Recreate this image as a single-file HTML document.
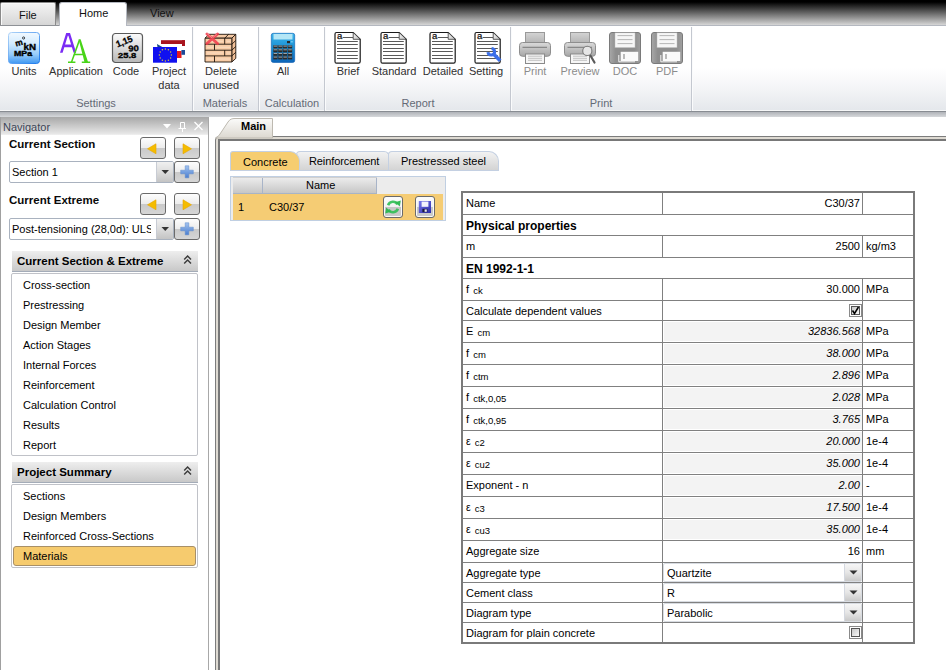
<!DOCTYPE html>
<html><head><meta charset="utf-8">
<style>
*{margin:0;padding:0;box-sizing:border-box}
html,body{width:946px;height:670px;overflow:hidden;background:#fff;font-family:"Liberation Sans",sans-serif;font-size:11px;color:#000}
.a{position:absolute}
.t{position:absolute;white-space:nowrap;line-height:13px}
svg{position:absolute;overflow:visible}
#top{left:0;top:0;width:946px;height:26px;background:linear-gradient(#000 0px,#000 2px,#d6d6d6 25px)}
#file{left:0;top:2px;width:56px;height:23px;background:linear-gradient(#f4f4f4,#d6d6d6);border:1px solid #8a8a8a;border-bottom:none;border-radius:2px 2px 0 0;box-shadow:inset 1px 1px 0 #fafafa}
#home{left:59px;top:2px;width:68px;height:25px;background:#fff;border:1px solid #b4b8c0;border-bottom:none;border-radius:3px 3px 0 0}
#ribbon{left:0;top:26px;width:946px;height:85px;background:linear-gradient(#fff 0px,#fff 42px,#f4f5f7 62px,#e4e7eb 85px)}
#rb1{left:0;top:110px;width:946px;height:1px;background:#f6f7f8}
#rb2{left:0;top:111px;width:946px;height:1px;background:#888c92}
#rb3{left:0;top:112px;width:946px;height:5px;background:linear-gradient(#b0b3b8,#d6d8db)}
.sep{position:absolute;top:27px;width:2px;height:84px;border-left:1px solid #c4c8d0;border-right:1px solid #fafbfc}
.rl{position:absolute;width:80px;text-align:center;white-space:nowrap;line-height:13px;color:#303030}
.gl{position:absolute;top:97px;width:100px;text-align:center;white-space:nowrap;color:#646a76;line-height:13px}
.dis{color:#8c8c8c}
#nav{left:0;top:117px;width:209px;height:553px;background:#fff;border-left:1px solid #a0a0a0;border-right:1px solid #a8a8a8}
#navt{left:1px;top:117px;width:207px;height:18px;background:linear-gradient(#a8a8a8,#e8e8e8 95%,#f4f4f4)}
.nbtn{position:absolute;width:26px;height:22px;border:1px solid #6a6a6a;border-radius:3px;background:linear-gradient(#fdfdfd 0,#ececec 50%,#c9c9c9 51%,#d6d6d6 100%)}
.combo{position:absolute;left:9px;width:165px;height:22px;border:1px solid #a9b2bf;border-radius:2px;background:#fff;overflow:hidden}
.cdd{position:absolute;right:0;top:0;width:17px;height:20px;background:linear-gradient(#f0f0f0,#dcdcdc 50%,#c4c4c4);border-left:1px solid #c8ccd4}
.hdr{position:absolute;left:12px;width:186px;height:21px;background:linear-gradient(#eeeeee,#c8c8c8);border-bottom:1px solid #a4acb8}
.lst{position:absolute;left:11px;width:187px;border:1px solid #c0c2c8;border-radius:2px;background:#fff}
.li{position:absolute;left:23px;white-space:nowrap;line-height:13px}
.bt{font-weight:bold;font-size:11.5px}
</style></head><body>
<div id="top" class="a"></div>
<div id="file" class="a"></div><div class="t" style="left:19px;top:9px;color:#111">File</div>
<div class="a" style="left:0;top:25px;width:59px;height:1px;background:#8e9196"></div><div class="a" style="left:126px;top:25px;width:820px;height:1px;background:#b4b8c0"></div><div id="home" class="a"></div><div class="t" style="left:79px;top:7px;color:#111">Home</div>
<div class="t" style="left:150px;top:7px;color:#111">View</div>
<div id="ribbon" class="a"></div>
<div id="rb1" class="a"></div><div id="rb2" class="a"></div><div id="rb3" class="a"></div>
<div class="sep" style="left:192px"></div>
<div class="sep" style="left:258px"></div>
<div class="sep" style="left:324px"></div>
<div class="sep" style="left:510px"></div>
<div class="sep" style="left:691px"></div>
<div class="rl" style="left:-16px;top:65px">Units</div>
<div class="rl" style="left:36px;top:65px">Application</div>
<div class="rl" style="left:86px;top:65px">Code</div>
<div class="rl" style="left:129px;top:65px">Project</div><div class="rl" style="left:129px;top:79px">data</div>
<div class="rl" style="left:181px;top:65px">Delete</div><div class="rl" style="left:181px;top:79px">unused</div>
<div class="rl" style="left:243px;top:65px">All</div>
<div class="rl" style="left:308px;top:65px">Brief</div>
<div class="rl" style="left:354px;top:65px">Standard</div>
<div class="rl" style="left:403px;top:65px">Detailed</div>
<div class="rl" style="left:446px;top:65px">Setting</div>
<div class="rl dis" style="left:495px;top:65px">Print</div>
<div class="rl dis" style="left:540px;top:65px">Preview</div>
<div class="rl dis" style="left:585px;top:65px">DOC</div>
<div class="rl dis" style="left:627px;top:65px">PDF</div>
<div class="gl" style="left:46px">Settings</div>
<div class="gl" style="left:175px">Materials</div>
<div class="gl" style="left:242px">Calculation</div>
<div class="gl" style="left:368px">Report</div>
<div class="gl" style="left:551px">Print</div>
<style>
.sec{font-weight:bold;font-size:12px}
.sub{font-size:9.5px;position:relative;top:1px;margin-left:1px}
.chk{position:absolute;width:13px;height:13px;border:1px solid #8a8a8a;background:#fff;padding:1px}
.chki{width:9px;height:9px;border:1px solid #555;background:linear-gradient(135deg,#c8c8c8,#f8f8f8)}
.cmb{position:absolute;width:199px;border:1px solid #d8dce2;border-radius:2px;background:#fff}
.cmbd{position:absolute;right:0;top:0;width:17px;height:100%;background:linear-gradient(#f6f6f6,#e6e6e6 50%,#c9c9c9);border-left:1px solid #d4d8e0}
</style>
<!-- Units icon -->
<svg style="left:8px;top:32px" width="32" height="32" viewBox="0 0 32 32">
<defs><linearGradient id="gu" x1="0" y1="0" x2="0" y2="1"><stop offset="0" stop-color="#f2f9ff"/><stop offset="0.35" stop-color="#d4ecff"/><stop offset="0.7" stop-color="#98ccfa"/><stop offset="1" stop-color="#3f98f2"/></linearGradient>
<linearGradient id="gub" x1="0" y1="0" x2="1" y2="1"><stop offset="0" stop-color="#b0d4f8"/><stop offset="1" stop-color="#1a78ec"/></linearGradient></defs>
<rect x="0.5" y="0.5" width="31" height="31" rx="3" fill="url(#gu)" stroke="url(#gub)"/>
<text x="8" y="14.5" font-family="Liberation Sans" font-weight="bold" font-size="8.5" stroke="#000" stroke-width="0.35" transform="rotate(-15 8 14.5)">m</text>
<circle cx="15.6" cy="6" r="1.1" fill="none" stroke="#000" stroke-width="0.7"/>
<text x="15.5" y="18" font-family="Liberation Sans" font-weight="bold" font-size="8.5" stroke="#000" stroke-width="0.35" textLength="12.5" lengthAdjust="spacingAndGlyphs">kN</text>
<text x="6" y="24" font-family="Liberation Sans" font-weight="bold" font-size="7.5" stroke="#000" stroke-width="0.4" textLength="18" lengthAdjust="spacingAndGlyphs">MPa</text>
</svg>
<!-- Application icon -->
<svg style="left:56px;top:30px" width="40" height="36" viewBox="0 0 40 36">
<path fill-rule="evenodd" fill="#7b2cf4" d="M4 22.8 L10.2 3 H14 L20.2 22.8 H17.6 L15.9 17.2 H8.3 L6.6 22.8 Z M9.1 14.6 H15.1 L12.4 5.8 H11.8 Z"/>
<g fill="#48d418">
<path d="M22.6 9.2 H24.6 L32.2 32.4 H28.6 Z"/>
<path d="M22.8 9.6 L14.6 32.4 H16.2 L23.8 11.6 Z"/>
<path d="M18.2 23.8 H28.6 V25.2 H17.7 Z"/>
<path d="M12 31.6 H19.4 V33 H12 Z M25.8 31.6 H34.2 V33 H25.8 Z"/>
</g>
</svg>
<!-- Code icon -->
<svg style="left:112px;top:33px" width="31" height="30" viewBox="0 0 31 30">
<defs><linearGradient id="gc" x1="0" y1="0" x2="0" y2="1"><stop offset="0" stop-color="#fcfcfc"/><stop offset="1" stop-color="#b8b8b8"/></linearGradient></defs>
<rect x="0.5" y="0.5" width="30" height="29" rx="3" fill="url(#gc)" stroke="#5a5a5a" stroke-width="1.2"/>
<text x="5.5" y="14.5" font-family="Liberation Sans" font-weight="bold" font-size="9" stroke="#000" stroke-width="0.3" transform="rotate(-22 5.5 14.5)" textLength="17" lengthAdjust="spacingAndGlyphs">1,15</text>
<text x="16.5" y="18.5" font-family="Liberation Sans" font-weight="bold" font-size="8.2" stroke="#000" stroke-width="0.3" transform="rotate(-4 16.5 18.5)" textLength="10.5" lengthAdjust="spacingAndGlyphs">90</text>
<text x="6" y="25.4" font-family="Liberation Sans" font-weight="bold" font-size="8" stroke="#000" stroke-width="0.35" textLength="18.2" lengthAdjust="spacingAndGlyphs">25.8</text>
</svg>
<!-- Project data -->
<svg style="left:152px;top:40px" width="34" height="24" viewBox="0 0 34 24">
<rect x="9" y="0.2" width="24" height="3.8" fill="#a8141e"/>
<rect x="30" y="0.2" width="3" height="5.8" fill="#a8141e"/>
<rect x="25" y="11" width="4.5" height="7" fill="#ea1a1a"/>
<rect x="29.4" y="10" width="3.6" height="4.8" fill="#1e4a98"/>
<path d="M5 4 L10.8 7.2 H5.5 Z" fill="#1a4a88"/>
<rect x="1" y="7" width="24" height="15.7" fill="#1010f0"/>
<g fill="#d8c838"><circle cx="13.40" cy="9.00" r="0.75"/><circle cx="16.40" cy="9.80" r="0.75"/><circle cx="18.60" cy="12.00" r="0.75"/><circle cx="19.40" cy="15.00" r="0.75"/><circle cx="18.60" cy="18.00" r="0.75"/><circle cx="16.40" cy="20.20" r="0.75"/><circle cx="13.40" cy="21.00" r="0.75"/><circle cx="10.40" cy="20.20" r="0.75"/><circle cx="8.20" cy="18.00" r="0.75"/><circle cx="7.40" cy="15.00" r="0.75"/><circle cx="8.20" cy="12.00" r="0.75"/><circle cx="10.40" cy="9.80" r="0.75"/></g>
</svg>
<!-- Delete unused -->
<svg style="left:203px;top:31px" width="34" height="33" viewBox="0 0 34 33">
<g stroke="#1e140c" stroke-width="0.9" stroke-linejoin="round">
<path d="M2 7.2 L6 3.3 H32.8 L28.8 7.2 Z" fill="#f6caa4"/>
<path d="M28.8 7.2 L32.8 3.3 V27.4 L28.8 31 Z" fill="#f2c098"/>
<rect x="2" y="7.2" width="26.8" height="23.8" fill="#f8cca6"/>
<path d="M2 13.2 H28.8 M2 19.2 H28.8 M2 24.9 H28.8" fill="none"/>
<path d="M21.7 7.2 V13.2 M11.5 13.2 V19.2 M21.7 19.2 V24.9 M11.5 24.9 V31 M21.7 7.2 L25.6 3.3" fill="none"/>
<path d="M28.8 13.2 L32.8 9.5 M28.8 19.2 L32.8 15.5 M28.8 24.9 L32.8 21.3" fill="none"/>
</g>
<g stroke="#fbe2cc" stroke-width="1" opacity="0.8">
<path d="M4 10.2 H20 M23.5 10.2 H27 M4 16.2 H10 M13.5 16.2 H27 M4 22 H20 M23.5 22 H27 M4 28 H10 M13.5 28 H27"/>
</g>
<g stroke="#f23a4a" stroke-width="3" stroke-linecap="round" opacity="0.85">
<path d="M4 3 L14.5 12.5 M14.5 3 L4 12.5"/>
</g>
<g stroke="#fcc0c8" stroke-width="0.8" opacity="0.7"><path d="M4.5 2.8 L9 7 M14 2.8 L9.5 7"/></g>
</svg>
<!-- All calculator -->
<svg style="left:271px;top:33px" width="24" height="30" viewBox="0 0 24 30">
<defs><linearGradient id="gk" x1="0" y1="0" x2="0" y2="1"><stop offset="0" stop-color="#3cb4ea"/><stop offset="0.5" stop-color="#1a90d4"/><stop offset="1" stop-color="#0c64b8"/></linearGradient></defs>
<rect x="0.3" y="0.3" width="23.4" height="29.2" rx="2" fill="url(#gk)" stroke="#0a5cb0" stroke-width="0.6"/>
<rect x="2.5" y="1" width="19" height="5.5" fill="#b4e6f6"/>
<rect x="16" y="8" width="3" height="2.2" fill="#2a2a2a"/><rect x="19.8" y="8" width="2" height="1.5" fill="#70c8f0"/>
<rect x="2.3" y="12.3" width="4.3" height="3.1" fill="#2a2a2a"/><rect x="2.6999999999999997" y="12.600000000000001" width="3.5" height="1" fill="#9aa4ac"/><rect x="7.2" y="12.3" width="4.3" height="3.1" fill="#2a2a2a"/><rect x="7.6000000000000005" y="12.600000000000001" width="3.5" height="1" fill="#9aa4ac"/><rect x="12" y="12.3" width="4.3" height="3.1" fill="#2a2a2a"/><rect x="12.4" y="12.600000000000001" width="3.5" height="1" fill="#9aa4ac"/><rect x="16.9" y="12.3" width="4.3" height="3.1" fill="#2a2a2a"/><rect x="17.299999999999997" y="12.600000000000001" width="3.5" height="1" fill="#9aa4ac"/><rect x="2.3" y="16" width="4.3" height="3.1" fill="#2a2a2a"/><rect x="2.6999999999999997" y="16.3" width="3.5" height="1" fill="#9aa4ac"/><rect x="7.2" y="16" width="4.3" height="3.1" fill="#2a2a2a"/><rect x="7.6000000000000005" y="16.3" width="3.5" height="1" fill="#9aa4ac"/><rect x="12" y="16" width="4.3" height="3.1" fill="#2a2a2a"/><rect x="12.4" y="16.3" width="3.5" height="1" fill="#9aa4ac"/><rect x="16.9" y="16" width="4.3" height="3.1" fill="#2a2a2a"/><rect x="17.299999999999997" y="16.3" width="3.5" height="1" fill="#9aa4ac"/><rect x="2.3" y="19.7" width="4.3" height="3.1" fill="#2a2a2a"/><rect x="2.6999999999999997" y="20.0" width="3.5" height="1" fill="#9aa4ac"/><rect x="7.2" y="19.7" width="4.3" height="3.1" fill="#2a2a2a"/><rect x="7.6000000000000005" y="20.0" width="3.5" height="1" fill="#9aa4ac"/><rect x="12" y="19.7" width="4.3" height="3.1" fill="#2a2a2a"/><rect x="12.4" y="20.0" width="3.5" height="1" fill="#9aa4ac"/><rect x="16.9" y="19.7" width="4.3" height="3.1" fill="#2a2a2a"/><rect x="17.299999999999997" y="20.0" width="3.5" height="1" fill="#9aa4ac"/><rect x="2.3" y="23.3" width="4.3" height="3.1" fill="#2a2a2a"/><rect x="2.6999999999999997" y="23.6" width="3.5" height="1" fill="#9aa4ac"/><rect x="7.2" y="23.3" width="4.3" height="3.1" fill="#2a2a2a"/><rect x="7.6000000000000005" y="23.6" width="3.5" height="1" fill="#9aa4ac"/><rect x="12" y="23.3" width="4.3" height="3.1" fill="#2a2a2a"/><rect x="12.4" y="23.6" width="3.5" height="1" fill="#9aa4ac"/><rect x="16.9" y="23.3" width="4.3" height="3.1" fill="#2a2a2a"/><rect x="17.299999999999997" y="23.6" width="3.5" height="1" fill="#9aa4ac"/>
</svg>
<svg style="left:334px;top:31px" width="28" height="33" viewBox="0 0 28 33"><defs><linearGradient id="gf0" x1="0" y1="0" x2="1" y2="1"><stop offset="0" stop-color="#f4f4f4"/><stop offset="1" stop-color="#c8c8c8"/></linearGradient></defs>
<path d="M1 3 Q1 1.5 2.5 1.5 H19.2 L26.2 8.3 V30.6 Q26.2 32.2 24.6 32.2 H2.5 Q1 32.2 1 30.6 Z" fill="#fff" stroke="#1a1a1a" stroke-width="1.2"/>
<path d="M19.2 1.5 V8.3 H26.2 Z" fill="url(#gf0)" stroke="#3a3a3a" stroke-width="0.8"/>
<text x="2.9" y="8" font-family="Liberation Sans" font-size="9.5" fill="#111" stroke="#111" stroke-width="0.25">a</text>
<g stroke="#505050" stroke-width="0.95"><path d="M8.6 6.5 H19 M3 10.5 H23.8 M3 13.5 H23.8 M3 17.5 H23.8 M3 20.5 H23.8 M3 24.5 H23.8 M3 27.5 H23.8"/></g>
</svg>
<svg style="left:380px;top:31px" width="28" height="33" viewBox="0 0 28 33"><defs><linearGradient id="gf1" x1="0" y1="0" x2="1" y2="1"><stop offset="0" stop-color="#f4f4f4"/><stop offset="1" stop-color="#c8c8c8"/></linearGradient></defs>
<path d="M1 3 Q1 1.5 2.5 1.5 H19.2 L26.2 8.3 V30.6 Q26.2 32.2 24.6 32.2 H2.5 Q1 32.2 1 30.6 Z" fill="#fff" stroke="#1a1a1a" stroke-width="1.2"/>
<path d="M19.2 1.5 V8.3 H26.2 Z" fill="url(#gf1)" stroke="#3a3a3a" stroke-width="0.8"/>
<text x="2.9" y="8" font-family="Liberation Sans" font-size="9.5" fill="#111" stroke="#111" stroke-width="0.25">a</text>
<g stroke="#505050" stroke-width="0.95"><path d="M8.6 6.5 H19 M3 10.5 H23.8 M3 13.5 H23.8 M3 17.5 H23.8 M3 20.5 H23.8 M3 24.5 H23.8 M3 27.5 H23.8"/></g>
</svg>
<svg style="left:429px;top:31px" width="28" height="33" viewBox="0 0 28 33"><defs><linearGradient id="gf2" x1="0" y1="0" x2="1" y2="1"><stop offset="0" stop-color="#f4f4f4"/><stop offset="1" stop-color="#c8c8c8"/></linearGradient></defs>
<path d="M1 3 Q1 1.5 2.5 1.5 H19.2 L26.2 8.3 V30.6 Q26.2 32.2 24.6 32.2 H2.5 Q1 32.2 1 30.6 Z" fill="#fff" stroke="#1a1a1a" stroke-width="1.2"/>
<path d="M19.2 1.5 V8.3 H26.2 Z" fill="url(#gf2)" stroke="#3a3a3a" stroke-width="0.8"/>
<text x="2.9" y="8" font-family="Liberation Sans" font-size="9.5" fill="#111" stroke="#111" stroke-width="0.25">a</text>
<g stroke="#505050" stroke-width="0.95"><path d="M8.6 6.5 H19 M3 10.5 H23.8 M3 13.5 H23.8 M3 17.5 H23.8 M3 20.5 H23.8 M3 24.5 H23.8 M3 27.5 H23.8"/></g>
</svg>
<svg style="left:474px;top:31px" width="28" height="33" viewBox="0 0 28 33"><defs><linearGradient id="gf3" x1="0" y1="0" x2="1" y2="1"><stop offset="0" stop-color="#f4f4f4"/><stop offset="1" stop-color="#c8c8c8"/></linearGradient></defs>
<path d="M1 3 Q1 1.5 2.5 1.5 H19.2 L26.2 8.3 V30.6 Q26.2 32.2 24.6 32.2 H2.5 Q1 32.2 1 30.6 Z" fill="#fff" stroke="#1a1a1a" stroke-width="1.2"/>
<path d="M19.2 1.5 V8.3 H26.2 Z" fill="url(#gf3)" stroke="#3a3a3a" stroke-width="0.8"/>
<text x="2.9" y="8" font-family="Liberation Sans" font-size="9.5" fill="#111" stroke="#111" stroke-width="0.25">a</text>
<g stroke="#505050" stroke-width="0.95"><path d="M8.6 6.5 H19 M3 10.5 H23.8 M3 13.5 H23.8 M3 17.5 H23.8 M3 20.5 H23.8 M3 24.5 H23.8 M3 27.5 H23.8"/></g>
<g stroke="#3a6ee8" fill="none" stroke-linecap="butt"><path d="M17.59 17.51 A3.3 3.3 0 1 1 14.01 21.09" stroke-width="3"/><path d="M19.3 22.8 L26.2 29.8" stroke-width="3.6"/></g></svg>
<!-- Print -->
<svg style="left:0;top:0;width:0;height:0"><defs>
<linearGradient id="gp" x1="0" y1="0" x2="0" y2="1"><stop offset="0" stop-color="#dadada"/><stop offset="1" stop-color="#a6a6a6"/></linearGradient>
<linearGradient id="gpt" x1="0" y1="0" x2="0" y2="1"><stop offset="0" stop-color="#d4d4d4"/><stop offset="1" stop-color="#b4b4b4"/></linearGradient>
<linearGradient id="gd" x1="0" y1="0" x2="1" y2="0"><stop offset="0" stop-color="#a8a8a8"/><stop offset="0.2" stop-color="#8e8e8e"/><stop offset="0.8" stop-color="#8e8e8e"/><stop offset="1" stop-color="#a0a0a0"/></linearGradient>
</defs></svg>
<svg style="left:519px;top:32px" width="33" height="32" viewBox="0 0 33 32"><rect x="6.5" y="0.5" width="19" height="10.5" fill="url(#gpt)" stroke="#999"/>
<rect x="0.5" y="10.5" width="31" height="13.8" rx="3" fill="url(#gp)" stroke="#8e8e8e"/>
<path d="M3.5 15.3 H28" stroke="#7a7a7a" stroke-width="1"/>
<rect x="6.5" y="22" width="19" height="9.5" fill="#f6f6f6" stroke="#8a8a8a"/>
<path d="M9 24.2 H23 M9 26.3 H23 M9 28.3 H23" stroke="#b4b4b4" stroke-width="0.8"/></svg>
<svg style="left:564px;top:32px" width="33" height="32" viewBox="0 0 33 32"><rect x="6.5" y="0.5" width="19" height="10.5" fill="url(#gpt)" stroke="#999"/>
<rect x="0.5" y="10.5" width="31" height="13.8" rx="3" fill="url(#gp)" stroke="#8e8e8e"/>
<path d="M3.5 15.3 H28" stroke="#7a7a7a" stroke-width="1"/>
<rect x="6.5" y="22" width="19" height="9.5" fill="#f6f6f6" stroke="#8a8a8a"/>
<path d="M9 24.2 H23 M9 26.3 H23 M9 28.3 H23" stroke="#b4b4b4" stroke-width="0.8"/>
<path d="M25.5 22 L30.5 30.5" stroke="#5a5a5a" stroke-width="2.2" stroke-linecap="round"/>
<circle cx="23.3" cy="18.9" r="4.6" fill="#e6e6e6" stroke="#7a7a7a" stroke-width="1.1"/></svg>
<svg style="left:609px;top:32px" width="32" height="32" viewBox="0 0 32 32"><rect x="0.5" y="0.5" width="31" height="31" rx="2.5" fill="url(#gd)" stroke="#7a7a7a"/>
<rect x="5.9" y="0.8" width="20.2" height="15" fill="#f6f6f6" stroke="#a0a0a0" stroke-width="0.5"/>
<path d="M8.5 3.6 H23.5 M8.5 7.6 H23.5 M8.5 11.6 H23.5" stroke="#a4a4a4" stroke-width="0.8"/>
<rect x="11.7" y="19.8" width="17.5" height="9.2" fill="#fafafa"/>
<path d="M9.8 23 V29.8 H26" stroke="#f4f4f4" stroke-width="1" fill="none"/>
<path d="M15 22 V27" stroke="#7a7a7a" stroke-width="1"/></svg>
<svg style="left:651px;top:32px" width="32" height="32" viewBox="0 0 32 32"><rect x="0.5" y="0.5" width="31" height="31" rx="2.5" fill="url(#gd)" stroke="#7a7a7a"/>
<rect x="5.9" y="0.8" width="20.2" height="15" fill="#f6f6f6" stroke="#a0a0a0" stroke-width="0.5"/>
<path d="M8.5 3.6 H23.5 M8.5 7.6 H23.5 M8.5 11.6 H23.5" stroke="#a4a4a4" stroke-width="0.8"/>
<rect x="11.7" y="19.8" width="17.5" height="9.2" fill="#fafafa"/>
<path d="M9.8 23 V29.8 H26" stroke="#f4f4f4" stroke-width="1" fill="none"/>
<path d="M15 22 V27" stroke="#7a7a7a" stroke-width="1"/></svg>

<!-- Main area bg -->
<div class="a" style="left:209px;top:117px;width:737px;height:553px;background:#fff"></div>

<!-- Navigator -->
<div id="nav" class="a"></div>
<div id="navt" class="a"></div>
<div class="t" style="left:3px;top:121px;color:#3c4658">Navigator</div>
<svg style="left:162px;top:122px" width="42" height="11" viewBox="0 0 42 11">
<path d="M1 2 H9 L5 6.5 Z" fill="#fff"/>
<path d="M18.5 0.5 H22.5 V6.5 H18.5 Z M16.5 6.5 H24 M20.5 6.5 V10" stroke="#fff" stroke-width="1" fill="none"/>
<path d="M32.5 0 L40.5 8 M40.5 0 L32.5 8" stroke="#fff" stroke-width="1.3"/>
</svg>
<div class="t bt" style="left:9px;top:138px;color:#0a0a0a">Current Section</div>
<div class="nbtn" style="left:140px;top:137px"></div>
<div class="nbtn" style="left:174px;top:137px"></div>
<svg style="left:140px;top:137px" width="60" height="22" viewBox="0 0 60 22"><path d="M16 6.8 V16.8 L7.5 11.8 Z" fill="#f4bc00" stroke="#e8a400" stroke-width="0.6"/><path d="M43 6.8 V16.8 L51.5 11.8 Z" fill="#f4bc00" stroke="#e8a400" stroke-width="0.6"/></svg>
<div class="combo" style="top:161px"><div class="cdd"></div></div>
<div class="t" style="left:12px;top:166px">Section 1</div>
<svg style="left:157px;top:161px" width="17" height="21" viewBox="0 0 17 21"><path d="M4.5 9 H12 L8.25 13 Z" fill="#333"/></svg>
<div class="nbtn" style="left:174px;top:161px"></div>
<svg style="left:174px;top:161px" width="26" height="22" viewBox="0 0 26 22"><defs><linearGradient id="gpl" x1="0" y1="0" x2="0" y2="1"><stop offset="0" stop-color="#a4c4f0"/><stop offset="1" stop-color="#4a7ed0"/></linearGradient></defs><path d="M11.2 4.8 H14.8 V9.2 H19.3 V12.8 H14.8 V16.8 H11.2 V12.8 H6.7 V9.2 H11.2 Z" fill="url(#gpl)" stroke="#5a88cc" stroke-width="0.5"/></svg>

<div class="t bt" style="left:9px;top:194px;color:#0a0a0a">Current Extreme</div>
<div class="nbtn" style="left:140px;top:193px"></div>
<div class="nbtn" style="left:174px;top:193px"></div>
<svg style="left:140px;top:193px" width="60" height="22" viewBox="0 0 60 22"><path d="M16 6.8 V16.8 L7.5 11.8 Z" fill="#f4bc00" stroke="#e8a400" stroke-width="0.6"/><path d="M43 6.8 V16.8 L51.5 11.8 Z" fill="#f4bc00" stroke="#e8a400" stroke-width="0.6"/></svg>
<div class="combo" style="top:218px"><div class="cdd"></div></div>
<div class="a" style="left:10px;top:219px;width:141px;height:19px;overflow:hidden"><div class="t" style="left:2px;top:4px">Post-tensioning (28,0d): ULS</div></div>
<svg style="left:157px;top:218px" width="17" height="21" viewBox="0 0 17 21"><path d="M4.5 9 H12 L8.25 13 Z" fill="#333"/></svg>
<div class="nbtn" style="left:174px;top:218px"></div>
<svg style="left:174px;top:218px" width="26" height="22" viewBox="0 0 26 22"><defs><linearGradient id="gpl" x1="0" y1="0" x2="0" y2="1"><stop offset="0" stop-color="#a4c4f0"/><stop offset="1" stop-color="#4a7ed0"/></linearGradient></defs><path d="M11.2 4.8 H14.8 V9.2 H19.3 V12.8 H14.8 V16.8 H11.2 V12.8 H6.7 V9.2 H11.2 Z" fill="url(#gpl)" stroke="#5a88cc" stroke-width="0.5"/></svg>

<div class="hdr" style="top:251px"></div>
<div class="t bt" style="left:17px;top:255px">Current Section &amp; Extreme</div>
<svg style="left:183px;top:254px" width="10" height="10" viewBox="0 0 10 10"><path d="M1.2 5.5 L4.6 1.9 L8 5.5 M1.2 9.5 L4.6 5.9 L8 9.5" stroke="#3a3a3a" stroke-width="1.4" fill="none"/></svg>
<div class="lst" style="top:273px;height:183px"></div>
<div class="li" style="top:279px">Cross-section</div>
<div class="li" style="top:299px">Prestressing</div>
<div class="li" style="top:319px">Design Member</div>
<div class="li" style="top:339px">Action Stages</div>
<div class="li" style="top:359px">Internal Forces</div>
<div class="li" style="top:379px">Reinforcement</div>
<div class="li" style="top:399px">Calculation Control</div>
<div class="li" style="top:419px">Results</div>
<div class="li" style="top:439px">Report</div>

<div class="hdr" style="top:462px"></div>
<div class="t bt" style="left:17px;top:466px">Project Summary</div>
<svg style="left:183px;top:465px" width="10" height="10" viewBox="0 0 10 10"><path d="M1.2 5.5 L4.6 1.9 L8 5.5 M1.2 9.5 L4.6 5.9 L8 9.5" stroke="#3a3a3a" stroke-width="1.4" fill="none"/></svg>
<div class="lst" style="top:484px;height:84px"></div>
<div class="a" style="left:13px;top:546px;width:183px;height:20px;background:#f6cb6e;border:1px solid #a89068;border-radius:3px"></div>
<div class="li" style="top:490px">Sections</div>
<div class="li" style="top:510px">Design Members</div>
<div class="li" style="top:530px">Reinforced Cross-Sections</div>
<div class="li" style="top:550px">Materials</div>
<!-- Main tab + frame -->
<div class="a" style="left:215px;top:136px;width:740px;height:540px;background:#dedad2;border:1px solid #7c7c7c;border-radius:4px 0 0 0"></div>
<svg style="left:214px;top:117px" width="60" height="22" viewBox="0 0 60 22">
<defs><linearGradient id="gm" x1="0" y1="0" x2="0" y2="1"><stop offset="0" stop-color="#fbfbfa"/><stop offset="1" stop-color="#dcd8d0"/></linearGradient></defs>
<path d="M1.5 21 C3 20 4 20 6 17 L14 5 C16 2 18 1.5 21 1.5 H58.5 V21 Z" fill="url(#gm)" stroke="#bdb9b0" stroke-width="1"/>
</svg>
<div class="t" style="left:241px;top:120px;font-weight:bold">Main</div>
<div class="a" style="left:218px;top:139px;width:740px;height:540px;border:2px solid #787878;border-right:none;border-bottom:none;background:#fff"></div>

<!-- sub tabs -->
<div class="a" style="left:296px;top:151px;width:94px;height:20px;background:linear-gradient(#f2f2f2,#d2d2d2);border:1px solid #c4d0e2;border-bottom:none;border-radius:4px 6px 0 0"></div>
<div class="a" style="left:388px;top:151px;width:111px;height:20px;background:linear-gradient(#f2f2f2,#d2d2d2);border:1px solid #c4d0e2;border-bottom:none;border-radius:4px 10px 0 0"></div>
<div class="a" style="left:230px;top:151px;width:70px;height:20px;background:#f6cd70;border:1px solid #c4d0e2;border-bottom:none;border-radius:3px 10px 0 0"></div>
<div class="a" style="left:230px;top:170px;width:269px;height:1px;background:#c4d0e2"></div>
<div class="t" style="left:243px;top:156px">Concrete</div>
<div class="t" style="left:309px;top:155px;letter-spacing:-0.1px">Reinforcement</div>
<div class="t" style="left:401px;top:155px">Prestressed steel</div>

<!-- grid -->
<div class="a" style="left:230px;top:176px;width:216px;height:45px;border:1px solid #c0cfe2;background:#ececec"></div>
<div class="a" style="left:233px;top:177px;width:144px;height:17px;background:linear-gradient(#ececec,#c6c6c6);border-top:1px solid #d0d0d0;border-bottom:1px solid #a8b4c6"></div>
<div class="a" style="left:262px;top:178px;width:1px;height:15px;background:#a8b4c8"></div>
<div class="a" style="left:376px;top:178px;width:1px;height:15px;background:#a8b4c8"></div>
<div class="t" style="left:306px;top:179px">Name</div>
<div class="a" style="left:233px;top:194px;width:210px;height:26px;background:#f5cc74"></div>
<div class="t" style="left:238px;top:201px">1</div>
<div class="t" style="left:269px;top:201px">C30/37</div>
<div class="a" style="left:383px;top:196px;width:20px;height:22px;border:1px solid #6a6a6a;border-radius:3px;background:linear-gradient(#fdfdfd,#f0f0f0 50%,#c6c6c6 51%,#cacaca);box-shadow:inset 0 0 0 1px #fafafa"></div>
<svg style="left:383px;top:196px" width="20" height="22" viewBox="0 0 20 22">
<g stroke="#34c058" stroke-width="2.6" fill="none" opacity="0.92">
<path d="M5.11 9.22 A5.2 5.2 0 0 1 14.5 8.4"/>
<path d="M14.89 12.78 A5.2 5.2 0 0 1 5.5 13.6"/>
</g>
<g fill="#2cb850" opacity="0.95">
<path d="M12 6.2 L17.8 4.4 L16.8 10.6 Z"/>
<path d="M8 15.8 L2.2 17.6 L3.2 11.4 Z"/>
</g>
</svg>
<div class="a" style="left:415px;top:196px;width:20px;height:22px;border:1px solid #6a6a6a;border-radius:3px;background:linear-gradient(#fdfdfd,#f0f0f0 50%,#c6c6c6 51%,#cacaca);box-shadow:inset 0 0 0 1px #fafafa"></div>
<svg style="left:415px;top:196px" width="20" height="22" viewBox="0 0 20 22">
<defs><linearGradient id="gsv" x1="0" y1="0" x2="1" y2="1"><stop offset="0" stop-color="#7a7aec"/><stop offset="1" stop-color="#2a2aa8"/></linearGradient></defs>
<rect x="3.8" y="5" width="12.2" height="12" fill="url(#gsv)"/>
<rect x="6.6" y="5.6" width="6.8" height="5.2" fill="#f4f4fc"/>
<rect x="7.4" y="12.8" width="5" height="3.4" fill="#1a1a3a"/>
<rect x="9.6" y="13.4" width="2.2" height="2.4" fill="#e8e8f8"/>
</svg>

<div class="a" style="left:461px;top:191px;width:454px;height:453px;border:2px solid #7a7a7a;background:#fff"></div>
<div class="a" style="left:463px;top:214px;width:450px;height:1px;background:#808080"></div>
<div class="a" style="left:662px;top:193px;width:1px;height:21px;background:#808080"></div>
<div class="a" style="left:862px;top:193px;width:1px;height:21px;background:#808080"></div>
<div class="t" style="left:466px;top:193px;line-height:21px">Name</div>
<div class="t" style="left:663px;top:193px;width:197px;text-align:right;line-height:21px;">C30/37</div>
<div class="a" style="left:463px;top:235px;width:450px;height:1px;background:#808080"></div>
<div class="t sec" style="left:466px;top:216px;line-height:20px">Physical properties</div>
<div class="a" style="left:463px;top:257px;width:450px;height:1px;background:#808080"></div>
<div class="a" style="left:662px;top:236px;width:1px;height:21px;background:#808080"></div>
<div class="a" style="left:862px;top:236px;width:1px;height:21px;background:#808080"></div>
<div class="t" style="left:466px;top:236px;line-height:21px">m</div>
<div class="t" style="left:663px;top:236px;width:197px;text-align:right;line-height:21px;">2500</div>
<div class="t" style="left:866px;top:236px;line-height:21px">kg/m3</div>
<div class="a" style="left:463px;top:278px;width:450px;height:1px;background:#808080"></div>
<div class="t sec" style="left:466px;top:259px;line-height:20px">EN 1992-1-1</div>
<div class="a" style="left:463px;top:300px;width:450px;height:1px;background:#808080"></div>
<div class="a" style="left:662px;top:279px;width:1px;height:21px;background:#808080"></div>
<div class="a" style="left:862px;top:279px;width:1px;height:21px;background:#808080"></div>
<div class="t" style="left:466px;top:279px;line-height:21px">f <span class="sub">ck</span></div>
<div class="t" style="left:663px;top:279px;width:197px;text-align:right;line-height:21px;">30.000</div>
<div class="t" style="left:866px;top:279px;line-height:21px">MPa</div>
<div class="a" style="left:463px;top:320px;width:450px;height:1px;background:#808080"></div>
<div class="a" style="left:662px;top:301px;width:1px;height:19px;background:#808080"></div>
<div class="a" style="left:862px;top:301px;width:1px;height:19px;background:#808080"></div>
<div class="t" style="left:466px;top:302px;line-height:19px">Calculate dependent values</div>
<div class="chk" style="left:849px;top:304px"><div class="chki"></div></div>
<svg style="left:849px;top:304px" width="13" height="13" viewBox="0 0 13 13"><path d="M3.5 6.5 L5.5 9.5 L9.5 3" stroke="#000" stroke-width="1.5" fill="none"/></svg>
<div class="a" style="left:463px;top:342px;width:450px;height:1px;background:#808080"></div>
<div class="a" style="left:662px;top:321px;width:1px;height:21px;background:#808080"></div>
<div class="a" style="left:862px;top:321px;width:1px;height:21px;background:#808080"></div>
<div class="t" style="left:466px;top:321px;line-height:21px">E <span class="sub">cm</span></div>
<div class="a" style="left:664px;top:322px;width:198px;height:19px;background:#f3f3f3"></div>
<div class="t" style="left:663px;top:321px;width:197px;text-align:right;line-height:21px;font-style:italic;">32836.568</div>
<div class="t" style="left:866px;top:321px;line-height:21px">MPa</div>
<div class="a" style="left:463px;top:364px;width:450px;height:1px;background:#808080"></div>
<div class="a" style="left:662px;top:343px;width:1px;height:21px;background:#808080"></div>
<div class="a" style="left:862px;top:343px;width:1px;height:21px;background:#808080"></div>
<div class="t" style="left:466px;top:343px;line-height:21px">f <span class="sub">cm</span></div>
<div class="a" style="left:664px;top:344px;width:198px;height:19px;background:#f3f3f3"></div>
<div class="t" style="left:663px;top:343px;width:197px;text-align:right;line-height:21px;font-style:italic;">38.000</div>
<div class="t" style="left:866px;top:343px;line-height:21px">MPa</div>
<div class="a" style="left:463px;top:386px;width:450px;height:1px;background:#808080"></div>
<div class="a" style="left:662px;top:365px;width:1px;height:21px;background:#808080"></div>
<div class="a" style="left:862px;top:365px;width:1px;height:21px;background:#808080"></div>
<div class="t" style="left:466px;top:365px;line-height:21px">f <span class="sub">ctm</span></div>
<div class="a" style="left:664px;top:366px;width:198px;height:19px;background:#f3f3f3"></div>
<div class="t" style="left:663px;top:365px;width:197px;text-align:right;line-height:21px;font-style:italic;">2.896</div>
<div class="t" style="left:866px;top:365px;line-height:21px">MPa</div>
<div class="a" style="left:463px;top:408px;width:450px;height:1px;background:#808080"></div>
<div class="a" style="left:662px;top:387px;width:1px;height:21px;background:#808080"></div>
<div class="a" style="left:862px;top:387px;width:1px;height:21px;background:#808080"></div>
<div class="t" style="left:466px;top:387px;line-height:21px">f <span class="sub">ctk,0,05</span></div>
<div class="a" style="left:664px;top:388px;width:198px;height:19px;background:#f3f3f3"></div>
<div class="t" style="left:663px;top:387px;width:197px;text-align:right;line-height:21px;font-style:italic;">2.028</div>
<div class="t" style="left:866px;top:387px;line-height:21px">MPa</div>
<div class="a" style="left:463px;top:430px;width:450px;height:1px;background:#808080"></div>
<div class="a" style="left:662px;top:409px;width:1px;height:21px;background:#808080"></div>
<div class="a" style="left:862px;top:409px;width:1px;height:21px;background:#808080"></div>
<div class="t" style="left:466px;top:409px;line-height:21px">f <span class="sub">ctk,0,95</span></div>
<div class="a" style="left:664px;top:410px;width:198px;height:19px;background:#f3f3f3"></div>
<div class="t" style="left:663px;top:409px;width:197px;text-align:right;line-height:21px;font-style:italic;">3.765</div>
<div class="t" style="left:866px;top:409px;line-height:21px">MPa</div>
<div class="a" style="left:463px;top:452px;width:450px;height:1px;background:#808080"></div>
<div class="a" style="left:662px;top:431px;width:1px;height:21px;background:#808080"></div>
<div class="a" style="left:862px;top:431px;width:1px;height:21px;background:#808080"></div>
<div class="t" style="left:466px;top:431px;line-height:21px"><span style="font-size:10.5px">ε</span> <span class="sub">c2</span></div>
<div class="a" style="left:664px;top:432px;width:198px;height:19px;background:#f3f3f3"></div>
<div class="t" style="left:663px;top:431px;width:197px;text-align:right;line-height:21px;font-style:italic;">20.000</div>
<div class="t" style="left:866px;top:431px;line-height:21px">1e-4</div>
<div class="a" style="left:463px;top:474px;width:450px;height:1px;background:#808080"></div>
<div class="a" style="left:662px;top:453px;width:1px;height:21px;background:#808080"></div>
<div class="a" style="left:862px;top:453px;width:1px;height:21px;background:#808080"></div>
<div class="t" style="left:466px;top:453px;line-height:21px"><span style="font-size:10.5px">ε</span> <span class="sub">cu2</span></div>
<div class="a" style="left:664px;top:454px;width:198px;height:19px;background:#f3f3f3"></div>
<div class="t" style="left:663px;top:453px;width:197px;text-align:right;line-height:21px;font-style:italic;">35.000</div>
<div class="t" style="left:866px;top:453px;line-height:21px">1e-4</div>
<div class="a" style="left:463px;top:496px;width:450px;height:1px;background:#808080"></div>
<div class="a" style="left:662px;top:475px;width:1px;height:21px;background:#808080"></div>
<div class="a" style="left:862px;top:475px;width:1px;height:21px;background:#808080"></div>
<div class="t" style="left:466px;top:475px;line-height:21px">Exponent - n</div>
<div class="a" style="left:664px;top:476px;width:198px;height:19px;background:#f3f3f3"></div>
<div class="t" style="left:663px;top:475px;width:197px;text-align:right;line-height:21px;font-style:italic;">2.00</div>
<div class="t" style="left:866px;top:475px;line-height:21px">-</div>
<div class="a" style="left:463px;top:518px;width:450px;height:1px;background:#808080"></div>
<div class="a" style="left:662px;top:497px;width:1px;height:21px;background:#808080"></div>
<div class="a" style="left:862px;top:497px;width:1px;height:21px;background:#808080"></div>
<div class="t" style="left:466px;top:497px;line-height:21px"><span style="font-size:10.5px">ε</span> <span class="sub">c3</span></div>
<div class="a" style="left:664px;top:498px;width:198px;height:19px;background:#f3f3f3"></div>
<div class="t" style="left:663px;top:497px;width:197px;text-align:right;line-height:21px;font-style:italic;">17.500</div>
<div class="t" style="left:866px;top:497px;line-height:21px">1e-4</div>
<div class="a" style="left:463px;top:540px;width:450px;height:1px;background:#808080"></div>
<div class="a" style="left:662px;top:519px;width:1px;height:21px;background:#808080"></div>
<div class="a" style="left:862px;top:519px;width:1px;height:21px;background:#808080"></div>
<div class="t" style="left:466px;top:519px;line-height:21px"><span style="font-size:10.5px">ε</span> <span class="sub">cu3</span></div>
<div class="a" style="left:664px;top:520px;width:198px;height:19px;background:#f3f3f3"></div>
<div class="t" style="left:663px;top:519px;width:197px;text-align:right;line-height:21px;font-style:italic;">35.000</div>
<div class="t" style="left:866px;top:519px;line-height:21px">1e-4</div>
<div class="a" style="left:463px;top:562px;width:450px;height:1px;background:#808080"></div>
<div class="a" style="left:662px;top:541px;width:1px;height:21px;background:#808080"></div>
<div class="a" style="left:862px;top:541px;width:1px;height:21px;background:#808080"></div>
<div class="t" style="left:466px;top:541px;line-height:21px">Aggregate size</div>
<div class="t" style="left:663px;top:541px;width:197px;text-align:right;line-height:21px;">16</div>
<div class="t" style="left:866px;top:541px;line-height:21px">mm</div>
<div class="a" style="left:463px;top:582px;width:450px;height:1px;background:#808080"></div>
<div class="a" style="left:662px;top:563px;width:1px;height:19px;background:#808080"></div>
<div class="a" style="left:862px;top:563px;width:1px;height:19px;background:#808080"></div>
<div class="t" style="left:466px;top:564px;line-height:19px">Aggregate type</div>
<div class="cmb" style="left:663px;top:563px;height:19px"><div class="cmbd"></div></div>
<div class="t" style="left:667px;top:564px;line-height:19px">Quartzite</div>
<svg style="left:845px;top:563px" width="17" height="19" viewBox="0 0 17 19"><path d="M4.5 7.5 H12.5 L8.5 11.5 Z" fill="#333"/></svg>
<div class="a" style="left:463px;top:602px;width:450px;height:1px;background:#808080"></div>
<div class="a" style="left:662px;top:583px;width:1px;height:19px;background:#808080"></div>
<div class="a" style="left:862px;top:583px;width:1px;height:19px;background:#808080"></div>
<div class="t" style="left:466px;top:584px;line-height:19px">Cement class</div>
<div class="cmb" style="left:663px;top:583px;height:19px"><div class="cmbd"></div></div>
<div class="t" style="left:667px;top:584px;line-height:19px">R</div>
<svg style="left:845px;top:583px" width="17" height="19" viewBox="0 0 17 19"><path d="M4.5 7.5 H12.5 L8.5 11.5 Z" fill="#333"/></svg>
<div class="a" style="left:463px;top:622px;width:450px;height:1px;background:#808080"></div>
<div class="a" style="left:662px;top:603px;width:1px;height:19px;background:#808080"></div>
<div class="a" style="left:862px;top:603px;width:1px;height:19px;background:#808080"></div>
<div class="t" style="left:466px;top:604px;line-height:19px">Diagram type</div>
<div class="cmb" style="left:663px;top:603px;height:19px"><div class="cmbd"></div></div>
<div class="t" style="left:667px;top:604px;line-height:19px">Parabolic</div>
<svg style="left:845px;top:603px" width="17" height="19" viewBox="0 0 17 19"><path d="M4.5 7.5 H12.5 L8.5 11.5 Z" fill="#333"/></svg>
<div class="a" style="left:662px;top:623px;width:1px;height:19px;background:#808080"></div>
<div class="a" style="left:862px;top:623px;width:1px;height:19px;background:#808080"></div>
<div class="t" style="left:466px;top:624px;line-height:19px">Diagram for plain concrete</div>
<div class="chk" style="left:849px;top:626px"><div class="chki"></div></div>
</body></html>
